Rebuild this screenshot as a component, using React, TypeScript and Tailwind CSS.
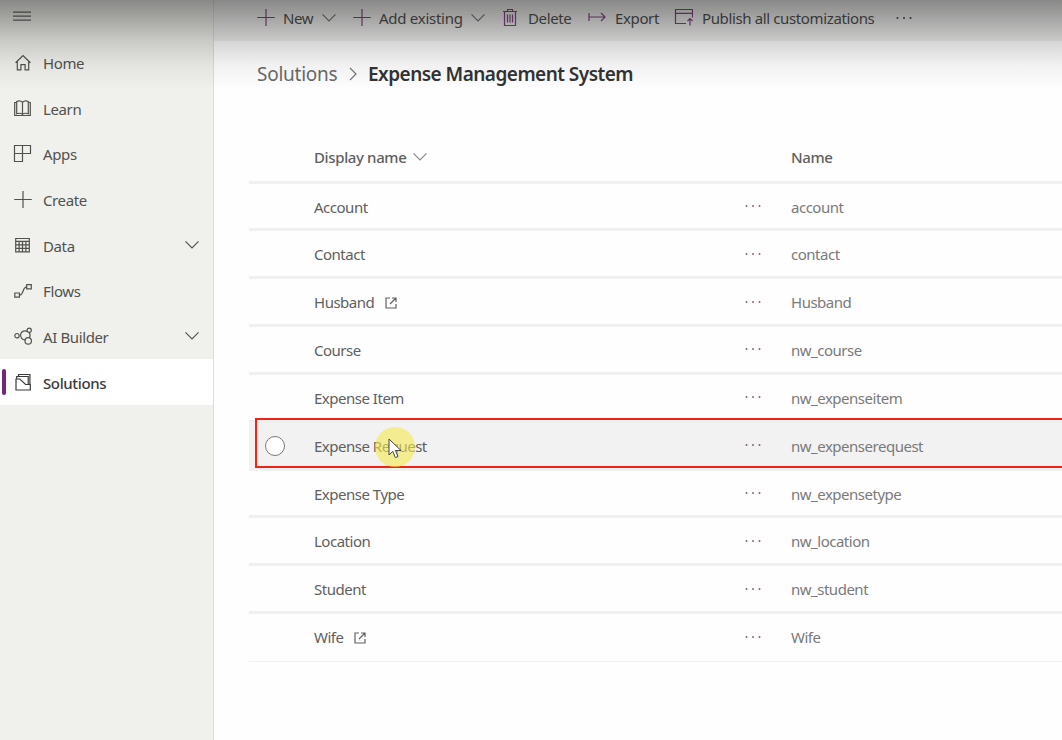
import React from "react";

type IconProps = { children: React.ReactNode; className?: string; w?: number; h?: number };

function Svg({ children, className = "", w = 20, h = 20 }: IconProps) {
  return (
    <svg width={w} height={h} viewBox={`0 0 ${w} ${h}`} fill="none" stroke="currentColor" strokeWidth={1.2} className={`shrink-0 ${className}`}>
      {children}
    </svg>
  );
}

const Plus = () => <Svg><path d="M10 .9v17.200M1.200 9.500h17.600" /></Svg>;
const Chevron = ({ className = "" }: { className?: string }) => (
  <Svg w={16} h={10} className={className}><path d="M1.500 1.300 8 7.800 14.500 1.300" /></Svg>
);

const icons = {
  home: <Svg><path d="M2.600 9.800 10 2.600l7.400 7.200M4.300 8.700v8.100h3.600v-5.200h4.200v5.200h3.600V8.700" /></Svg>,
  learn: <Svg><path d="M9.500 4v12.200M9.500 4.200C8 2.800 5.200 2.800 3.700 3.500v12.300c1.800-.7 4.200-.7 5.800.6 1.600-1.300 4-1.300 5.800-.6V3.500C13.800 2.800 11 2.800 9.500 4.200M3.700 4.500H1.700v13h15.600v-13h-2" /></Svg>,
  apps: <Svg><path d="M1.500 1.500h16v8h-16zM9.500 1.500v16h-8v-8" /></Svg>,
  create: <Svg><path d="M10 1.900v17.200M1.200 10.500h17.600" /></Svg>,
  data: <Svg><path d="M2.700 3.500h13.600v13.300H2.700zM2.700 6.300h13.600M2.700 9.800h13.600M2.700 13.300h13.600M6.100 6.300v10.500M9.500 6.300v10.500M12.900 6.300v10.500" /></Svg>,
  flows: <Svg><path d="M1.800 12h4.600v4.200H1.800zM13.700 3.700h4.600v4.200h-4.600zM6.400 14.200c4.400 0 3-8.400 7.300-8.400" /></Svg>,
  ai: <Svg><circle cx="4" cy="9.700" r="2.200" /><circle cx="16.200" cy="4.200" r="2.100" /><circle cx="15.200" cy="14.900" r="3.200" /><path d="M14.300 5.400a4.500 4.500 0 1 0-2.200 8.400M16 6.400c1.300 1.500 1.400 3.400.4 5.300" /></Svg>,
  solutions: <Svg><path d="M3 7h3.800l5.800 5.500h4.700V18H3zM3.700 6.900V4.500h11.500v7.800M5.500 4.400V2.500h11.400v9.800" /></Svg>,
};

const nav = [
  { label: "Home", icon: icons.home },
  { label: "Learn", icon: icons.learn },
  { label: "Apps", icon: icons.apps },
  { label: "Create", icon: icons.create },
  { label: "Data", icon: icons.data, expandable: true },
  { label: "Flows", icon: icons.flows },
  { label: "AI Builder", icon: icons.ai, expandable: true },
  { label: "Solutions", icon: icons.solutions, active: true },
];

const rows = [
  { display: "Account", name: "account" },
  { display: "Contact", name: "contact" },
  { display: "Husband", name: "Husband", external: true },
  { display: "Course", name: "nw_course" },
  { display: "Expense Item", name: "nw_expenseitem" },
  { display: "Expense Request", name: "nw_expenserequest", hovered: true },
  { display: "Expense Type", name: "nw_expensetype" },
  { display: "Location", name: "nw_location" },
  { display: "Student", name: "nw_student" },
  { display: "Wife", name: "Wife", external: true },
];

function Dots({ className = "" }: { className?: string }) {
  return (
    <svg width="20" height="6" viewBox="0 0 20 6" fill="currentColor" className={`shrink-0 ${className}`}>
      <circle cx="2.500" cy="3" r="1" /><circle cx="9" cy="3" r="1" /><circle cx="15.500" cy="3" r="1" />
    </svg>
  );
}

function Sidebar() {
  return (
    <aside className="flex w-[214px] shrink-0 flex-col border-r border-[#dcddd9] bg-[#f0f1ec] text-[#515150]">
      <div className="flex h-[39.700px] shrink-0 items-start pl-[13px] pt-[11px]">
        <Svg w={18} h={11} className="text-[#666]"><path d="M0 1.200h18M0 5.200h18M0 9.200h18" /></Svg>
      </div>
      {nav.map((item) => (
        <div key={item.label} className={`relative flex h-[45.660px] shrink-0 items-center pl-[13px] ${item.active ? "bg-white text-[#3a3a3a]" : ""}`}>
          {item.active && <span className="absolute left-[2px] top-[10px] h-[26px] w-[4px] rounded-full bg-[#742774]" />}
          {item.icon}
          <span className={`ml-[10px] flex-1 pt-[1.800px] text-[15px] tracking-[-0.38px] ${item.active ? "font-medium" : ""}`}>{item.label}</span>
          {item.expandable && <Chevron className="mr-[13px]" />}
        </div>
      ))}
    </aside>
  );
}

function CommandBar() {
  return (
    <div className="flex h-[41px] shrink-0 items-start bg-[#f0f0ef] pl-[42px] text-[15px] tracking-[-0.37px] text-[#505050] [&_svg]:text-[#8a4488]">
      <div className="flex h-[36px] w-[96px] items-center"><Plus /><span className="ml-[7px] w-[32px]">New</span><Chevron className="ml-[6px] !text-[#777]" /></div>
      <div className="flex h-[36px] w-[150px] items-center"><Plus /><span className="ml-[7px] w-[84px] whitespace-nowrap tracking-[-0.27px]">Add existing</span><Chevron className="ml-[7px] !text-[#777]" /></div>
      <div className="flex h-[36px] w-[85px] items-center">
        <Svg w={16}><path d="M1 3.500h14M5.500 3.300V1.500h5v1.800M2.500 3.500V17.500h11V3.500M5.500 6.500v8M8 6.500v8M10.500 6.500v8" /></Svg>
        <span className="ml-[10px]">Delete</span>
      </div>
      <div className="flex h-[36px] w-[86px] items-center">
        <Svg><path d="M2 5v8M2 9h16M14 5l4 4-4 4" /></Svg>
        <span className="ml-[8px]">Export</span>
      </div>
      <div className="flex h-[36px] w-[218px] items-center">
        <Svg><path d="M13 15.500H2.500v-14h17v8M2.500 5.300h17M17 17.500v-7M14.500 13l2.500-2.500L19.500 13" /></Svg>
        <span className="ml-[9px] whitespace-nowrap">Publish all customizations</span>
      </div>
      <div className="flex h-[35px] items-center pl-[4px]"><Dots className="!text-[#444]" /></div>
    </div>
  );
}

function SolutionTable() {
  return (
    <div className="ml-[35px] mt-[42px] text-[15px] tracking-[-0.49px] text-[#606060]">
      <div className="flex h-[50.500px] items-center border-b-[3px] border-[#f0f0f0] pl-[65px] font-medium tracking-[-0.37px]">
        <div className="flex w-[477px] items-center"><span>Display name</span><Chevron className="ml-[6px] text-[#888]" /></div>
        <span>Name</span>
      </div>
      {rows.map((row, i) => (
        <div
          key={row.display}
          className={`relative flex h-[47.850px] items-center border-[#f0f0f0] pl-[65px] ${i === rows.length - 1 ? "border-b" : "border-b-[3px] pt-[1.800px]"} ${row.hovered ? "bg-[#f2f2f2]" : ""}`}
        >
          {row.hovered && <span className="absolute left-[16px] top-[13px] h-[20px] w-[20px] rounded-full border border-[#777] bg-white" />}
          <div className="flex w-[429px] items-center">
            <span>{row.display}</span>
            {row.external && (
              <Svg w={12} h={12} className="ml-[11px]"><path d="M5 1H1v10h10V7M7 1h4v4M11 1 5 7" /></Svg>
            )}
          </div>
          <Dots className="-mt-[2px] ml-[1px] text-[#886080]" />
          <span className="ml-[27px] text-[#7a7a7a]">{row.name}</span>
          {row.hovered && (
            <>
              <span className="absolute -right-[4px] -top-[4.500px] left-[6px] h-[50px] border-2 border-[#ee2415]" />
              <span className="absolute left-[126px] top-[4.500px] h-[40px] w-[40px] rounded-full bg-[#f3e94e]/60" />
              <svg className="absolute left-[139px] top-[15px]" width="14" height="22" viewBox="0 0 14 22">
                <path d="M1 1v16l3.800-3.600 2.500 6.200 2.700-1.100-2.600-6H13z" fill="#fff" stroke="#444" />
              </svg>
            </>
          )}
        </div>
      ))}
    </div>
  );
}

export default function App() {
  return (
    <div className="relative flex h-[740px] w-[1062px] overflow-hidden bg-[#fefefe] font-['Noto_Sans',sans-serif]">
      <Sidebar />
      <main className="flex min-w-0 flex-1 flex-col overflow-hidden">
        <CommandBar />
        <div className="mt-[17px] flex h-[33px] shrink-0 items-center pl-[43px] text-[19px]">
          <span className="w-[81px] tracking-[-0.25px] text-[#6a6a6a]">Solutions</span>
          <Svg w={8} h={14} className="-mt-[2px] ml-[11px] text-[#777]"><path d="m1 1 6 6-6 6" /></Svg>
          <h1 className="ml-[11px] whitespace-nowrap font-semibold tracking-[-0.53px] text-[#333]">Expense Management System</h1>
        </div>
        <SolutionTable />
      </main>
      <div className="pointer-events-none absolute inset-x-0 top-0 h-[90px] bg-[linear-gradient(to_bottom,rgba(0,0,0,0.43)_0px,rgba(0,0,0,0.3)_20px,rgba(0,0,0,0.16)_41px,rgba(0,0,0,0.05)_65px,transparent_90px)]" />
    </div>
  );
}
